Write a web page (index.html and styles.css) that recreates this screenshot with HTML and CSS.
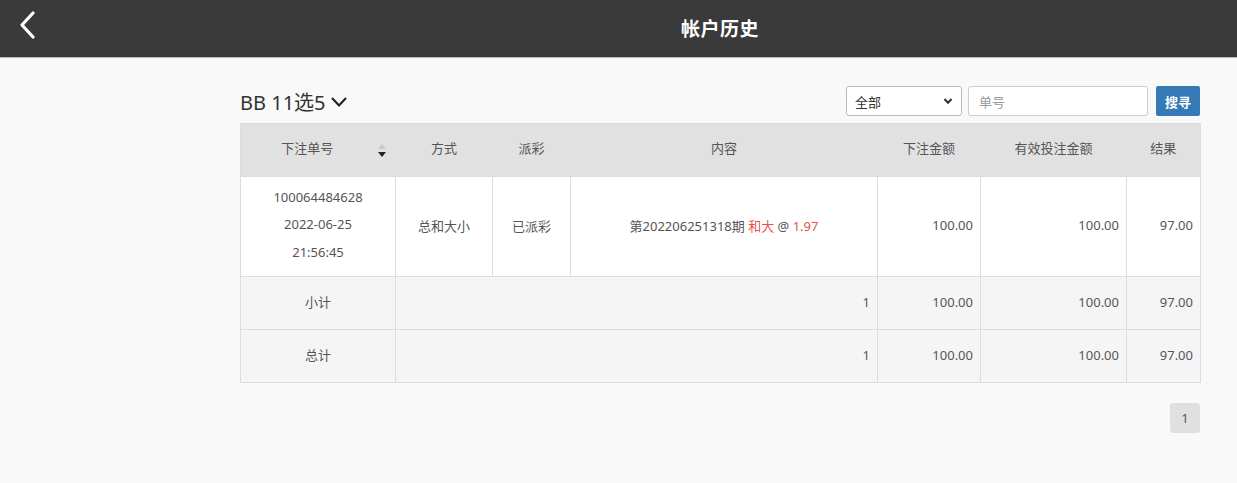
FILE: index.html
```html
<!DOCTYPE html>
<html lang="zh">
<head>
<meta charset="utf-8">
<title>帐户历史</title>
<link rel="stylesheet" href="styles.css">
</head>
<body>
<header class="topbar">
  <a class="back" href="#" aria-label="返回">
    <svg width="18" height="28" viewBox="0 0 18 28"><path d="M15 2 L4 14 L15 26" fill="none" stroke="#fff" stroke-width="3.2" stroke-linecap="round" stroke-linejoin="round"/></svg>
  </a>
  <h1 class="title">帐户历史</h1>
</header>
<main class="content">
  <div class="toolbar">
    <div class="game">BB 11选5
      <svg class="chev" width="18" height="12" viewBox="0 0 18 12"><path d="M2 2 L9 9.5 L16 2" fill="none" stroke="#222" stroke-width="2.2"/></svg>
    </div>
    <div class="filters">
      <div class="select">全部
        <svg width="10" height="8" viewBox="0 0 10 8"><path d="M1.5 2 L5 5.8 L8.5 2" fill="none" stroke="#333" stroke-width="2"/></svg>
      </div>
      <div class="input">单号</div>
      <button class="btn">搜寻</button>
    </div>
  </div>
  <table class="grid">
    <colgroup>
      <col class="c1"><col class="c2"><col class="c3"><col class="c4"><col class="c5"><col class="c6"><col class="c7">
    </colgroup>
    <thead>
      <tr>
        <th class="sortable">下注单号<span class="sort"><i class="up"></i><i class="down"></i></span></th>
        <th>方式</th>
        <th>派彩</th>
        <th>内容</th>
        <th>下注金额</th>
        <th>有效投注金额</th>
        <th>结果</th>
      </tr>
    </thead>
    <tbody>
      <tr class="data">
        <td class="center multi">100064484628<br>2022-06-25<br>21:56:45</td>
        <td class="center">总和大小</td>
        <td class="center">已派彩</td>
        <td class="center">第202206251318期 <span class="red">和大</span> @ <span class="red">1.97</span></td>
        <td class="num">100.00</td>
        <td class="num">100.00</td>
        <td class="num">97.00</td>
      </tr>
      <tr class="sum">
        <td class="center">小计</td>
        <td class="num" colspan="3">1</td>
        <td class="num">100.00</td>
        <td class="num">100.00</td>
        <td class="num">97.00</td>
      </tr>
      <tr class="sum">
        <td class="center">总计</td>
        <td class="num" colspan="3">1</td>
        <td class="num">100.00</td>
        <td class="num">100.00</td>
        <td class="num">97.00</td>
      </tr>
    </tbody>
  </table>
  <div class="pager"><span class="page">1</span></div>
</main>
</body>
</html>
```
FILE: styles.css
```css
* { box-sizing: border-box; }
html, body { margin: 0; padding: 0; }
body {
  background: #f9f9f9;
  font-family: "Noto Sans", "Noto Sans CJK SC", sans-serif;
  font-size: 13px;
  color: #555;
  width: 1237px;
  height: 483px;
  overflow: hidden;
}
.topbar {
  height: 58px;
  background: #3a3a3a;
  border-bottom: 1px solid #bcbcbc;
  display: flex;
  align-items: center;
  position: relative;
}
.back {
  position: absolute;
  left: 18px;
  top: 11px;
  display: block;
  width: 18px;
  height: 28px;
}
.title {
  margin: 0 0 0 240px;
  width: 960px;
  text-align: center;
  color: #fff;
  font-size: 19px;
  font-weight: bold;
  font-family: "Noto Sans CJK SC", sans-serif;
  letter-spacing: 0.5px;
  padding-bottom: 2px;
}
.content {
  width: 960px;
  margin: 0 0 0 240px;
  padding-top: 28px;
}
.toolbar {
  display: flex;
  justify-content: space-between;
  align-items: center;
  height: 30px;
  margin-bottom: 7px;
}
.game {
  font-size: 20px;
  color: #333;
  display: flex;
  align-items: center;
  gap: 4px;
  padding-top: 1px;
}
.chev { margin-top: 1px; }
.filters {
  display: flex;
  align-items: center;
  height: 30px;
}
.select {
  width: 116px;
  height: 30px;
  border: 1px solid #bbb;
  border-radius: 3px;
  background: #fff;
  color: #333;
  padding: 0 8px;
  display: flex;
  align-items: center;
  justify-content: space-between;
  font-size: 13px;
}
.input {
  width: 180px;
  height: 30px;
  margin-left: 6px;
  border: 1px solid #ccc;
  border-radius: 3px;
  background: #fff;
  color: #999;
  padding: 0 10px;
  display: flex;
  align-items: center;
}
.btn {
  margin-left: 8px;
  width: 44px;
  height: 30px;
  border: 0;
  border-radius: 2px;
  background: #337ab7;
  color: #fff;
  font-family: "Noto Sans CJK SC", sans-serif;
  font-size: 13px;
  font-weight: bold;
  padding: 0;
}
.grid {
  width: 960px;
  border-collapse: collapse;
  table-layout: fixed;
  border: 1px solid #ddd;
}
.c1 { width: 155px; }
.c2 { width: 97px; }
.c3 { width: 78px; }
.c4 { width: 307px; }
.c5 { width: 103px; }
.c6 { width: 146px; }
.c7 { width: 74px; }
.grid th {
  background: #e1e1e1;
  height: 53px;
  font-weight: normal;
  color: #555;
  text-align: center;
  padding: 0 0 5px;
  position: relative;
}
.grid th.sortable { padding-right: 22px; }
.sort {
  position: absolute;
  right: 10px;
  top: 20px;
  width: 8px;
  height: 14px;
}
.sort i {
  position: absolute;
  left: 0;
  width: 0;
  height: 0;
  border-left: 4px solid transparent;
  border-right: 4px solid transparent;
}
.sort .up { top: 0; border-bottom: 5px solid #c8c8c8; }
.sort .down { top: 8px; border-top: 5px solid #222; }
.grid td {
  border: 1px solid #ddd;
  padding: 0 7px 3px;
  color: #555;
}
.grid tr.data td { background: #fff; height: 100px; }
.grid tr.sum td { background: #f5f5f5; height: 53px; }
.center { text-align: center; }
.num { text-align: right; }
.multi { line-height: 27.5px; }
.red { color: #e5534b; }
.pager {
  display: flex;
  justify-content: flex-end;
  margin-top: 20px;
}
.page {
  width: 30px;
  height: 30px;
  background: #e0e0e0;
  border-radius: 3px;
  display: flex;
  align-items: center;
  justify-content: center;
  color: #555;
}
```
